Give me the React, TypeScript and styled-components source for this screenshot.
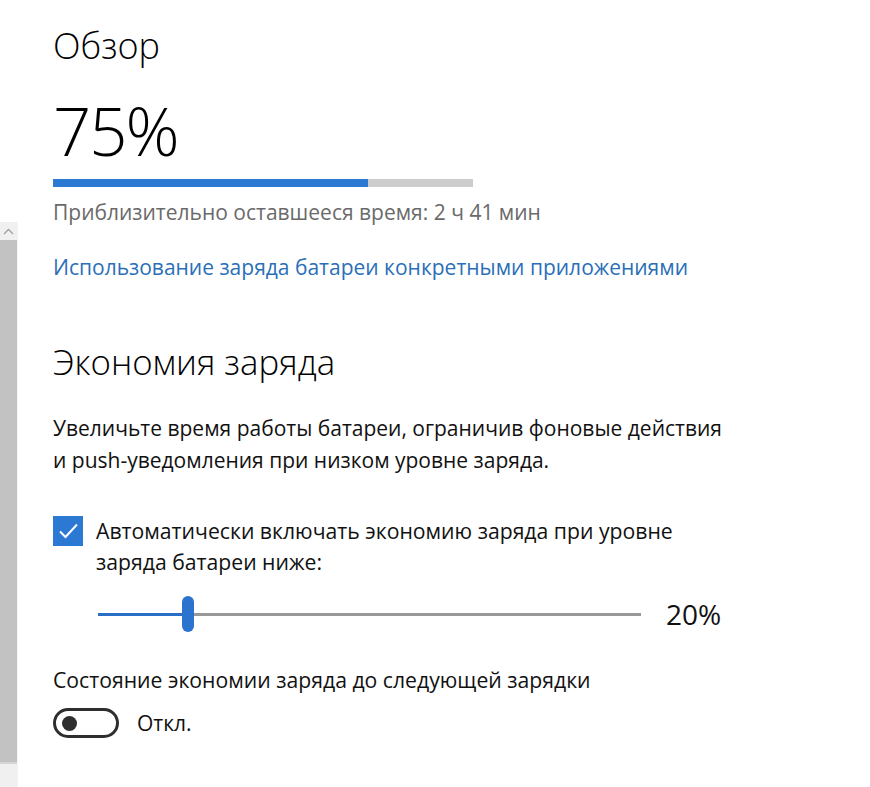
import React from "react";
import styled, { createGlobalStyle } from "styled-components";

const GlobalStyle = createGlobalStyle`
  html, body {
    margin: 0;
    padding: 0;
    background: #ffffff;
  }
  body {
    font-family: "Open Sans", "Noto Sans", sans-serif;
    color: #000000;
  }
`;

const BATTERY_LEVEL = 75;
const SAVER_THRESHOLD = 20;

function App(): JSX.Element {
  return (
    <Page>
      <GlobalStyle />
      <ScrollBar>
        <ScrollArrow>
          <svg width="11" height="7" viewBox="0 0 11 7">
            <polyline points="1,6 5.5,1.5 10,6" fill="none" stroke="#a0a0a0" strokeWidth="1.3" />
          </svg>
        </ScrollArrow>
        <ScrollThumb />
        <ScrollTrack />
      </ScrollBar>

      <Content>
        <SectionTitle>Обзор</SectionTitle>
        <BigPercent>{BATTERY_LEVEL}%</BigPercent>
        <ChargeBar>
          <ChargeFill style={{ width: `${BATTERY_LEVEL}%` }} />
        </ChargeBar>
        <RemainingTime>Приблизительно оставшееся время: 2 ч 41 мин</RemainingTime>
        <Link href="#">Использование заряда батареи конкретными приложениями</Link>

        <SectionTitle $spaced>Экономия заряда</SectionTitle>
        <Paragraph>
          Увеличьте время работы батареи, ограничив фоновые действия
          <br />и push-уведомления при низком уровне заряда.
        </Paragraph>

        <CheckRow>
          <CheckBox>
            <svg width="30" height="30" viewBox="0 0 30 30">
              <polyline points="7,15.5 12.5,21 24,8.5" fill="none" stroke="#ffffff" strokeWidth="2" />
            </svg>
          </CheckBox>
          <CheckLabel>
            Автоматически включать экономию заряда при уровне
            <br />
            заряда батареи ниже:
          </CheckLabel>
        </CheckRow>

        <SliderRow>
          <SliderTrack>
            <SliderFill style={{ width: "89px" }} />
            <SliderThumb style={{ left: "84px" }} />
          </SliderTrack>
          <SliderValue>{SAVER_THRESHOLD}%</SliderValue>
        </SliderRow>

        <Label>Состояние экономии заряда до следующей зарядки</Label>
        <ToggleRow>
          <Toggle>
            <ToggleKnob />
          </Toggle>
          <ToggleText>Откл.</ToggleText>
        </ToggleRow>
      </Content>
    </Page>
  );
}

export default App;

const Page = styled.div`
  display: flex;
  min-height: 787px;
  width: 870px;
  overflow: hidden;
`;

const ScrollBar = styled.div`
  width: 17px;
  margin-top: 222px;
  display: flex;
  flex-direction: column;
  border-right: 1px solid #f4f4f4;
`;

const ScrollArrow = styled.div`
  height: 18px;
  background: #f0f0f0;
  display: flex;
  align-items: center;
  justify-content: center;
`;

const ScrollThumb = styled.div`
  height: 522px;
  background: #c2c2c2;
  border-bottom: 2px solid #d6d6d6;
`;

const ScrollTrack = styled.div`
  flex: 1;
  background: #f0f0f0;
`;

const Content = styled.div`
  flex: 1;
  padding: 22px 0 0 35px;
  display: flex;
  flex-direction: column;
  align-items: flex-start;
`;

const SectionTitle = styled.h2<{ $spaced?: boolean }>`
  margin: ${(p) => (p.$spaced ? "57px" : "0")} 0 0;
  font-size: ${(p) => (p.$spaced ? "34.8px" : "36px")};
  font-weight: 300;
  line-height: 48px;
  color: #000;
`;

const BigPercent = styled.div`
  margin-top: 20px;
  font-size: 67px;
  font-weight: 300;
  line-height: 80px;
  letter-spacing: -2px;
`;

const ChargeBar = styled.div`
  margin-top: 9px;
  width: 420px;
  height: 8px;
  background: #cccccc;
`;

const ChargeFill = styled.div`
  height: 100%;
  background: #2b79d2;
`;

const RemainingTime = styled.div`
  margin-top: 11px;
  font-size: 21px;
  line-height: 28px;
  color: #6a6a6a;
`;

const Link = styled.a`
  margin-top: 27px;
  font-size: 21px;
  line-height: 28px;
  color: #2a6fb8;
  text-decoration: none;
`;

const Paragraph = styled.p`
  margin: 26px 0 0;
  font-size: 21px;
  line-height: 32px;
  color: #111;
`;

const CheckRow = styled.div`
  margin-top: 39px;
  display: flex;
  align-items: flex-start;
  gap: 13px;
`;

const CheckBox = styled.div`
  margin-top: 1px;
  width: 30px;
  height: 30px;
  background: #2b79d2;
  flex-shrink: 0;
  svg {
    display: block;
  }
`;

const CheckLabel = styled.div`
  font-size: 21.2px;
  line-height: 31px;
  color: #111;
`;

const SliderRow = styled.div`
  margin: 19px 0 0 45px;
  display: flex;
  align-items: center;
  gap: 25px;
  height: 36px;
`;

const SliderTrack = styled.div`
  position: relative;
  width: 543px;
  height: 3px;
  background: #999999;
`;

const SliderFill = styled.div`
  height: 100%;
  background: #2a6fc6;
`;

const SliderThumb = styled.div`
  position: absolute;
  top: -17px;
  width: 12px;
  height: 36px;
  border-radius: 6px;
  background: #2a74d0;
`;

const SliderValue = styled.div`
  font-size: 28px;
  line-height: 36px;
  color: #111;
`;

const Label = styled.div`
  margin-top: 32px;
  font-size: 21.2px;
  line-height: 32px;
  color: #111;
`;

const ToggleRow = styled.div`
  margin-top: 12px;
  display: flex;
  align-items: center;
  gap: 18px;
`;

const Toggle = styled.div`
  box-sizing: border-box;
  width: 66px;
  height: 30px;
  border: 3px solid #2e2e2e;
  border-radius: 15px;
  display: flex;
  align-items: center;
  padding-left: 6px;
`;

const ToggleKnob = styled.div`
  width: 15px;
  height: 15px;
  border-radius: 50%;
  background: #2e2e2e;
`;

const ToggleText = styled.div`
  font-size: 21px;
  line-height: 30px;
  color: #111;
`;
